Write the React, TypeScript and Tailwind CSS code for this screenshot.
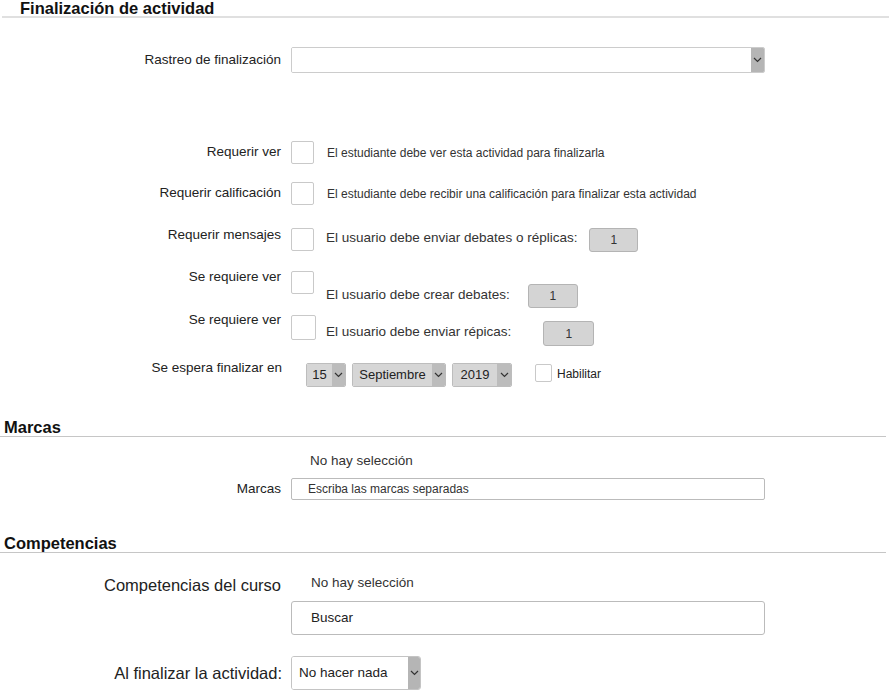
import React from "react";

const font = { fontFamily: '"Liberation Sans", Arial, sans-serif' };

function Chevron() {
  return (
    <svg width="9" height="6" viewBox="0 0 9 6" className="block">
      <polyline points="1,1 4.5,4.5 8,1" fill="none" stroke="#333" strokeWidth="1.2" />
    </svg>
  );
}

function Checkbox({ size = "w-[23px] h-[23px]", className = "" }: { size?: string; className?: string }) {
  return <div className={`${size} shrink-0 border border-[#c9c9c9] rounded-[2px] bg-white ${className}`} />;
}

function NumBox({ className = "" }: { className?: string }) {
  return (
    <div
      className={`shrink-0 flex items-center justify-center bg-[#d4d4d4] border border-[#b4b4b4] rounded-[3px] text-[12px] text-[#333] ${className}`}
    >
      1
    </div>
  );
}

function DateSelect({ value, width, arrow }: { value: string; width: string; arrow: string }) {
  return (
    <div className={`${width} h-[24px] shrink-0 flex border border-[#bdbdbd] rounded-[2px] overflow-hidden`}>
      <div className="flex-1 bg-[#d6d6d6] flex items-center justify-center text-[13px] text-[#222]">{value}</div>
      <div className={`${arrow} bg-[#bcbcbc] flex items-center justify-center`}>
        <Chevron />
      </div>
    </div>
  );
}

function Label({ children, className = "" }: { children: React.ReactNode; className?: string }) {
  return <div className={`w-[281px] shrink-0 text-right text-[13.5px] text-[#222] ${className}`}>{children}</div>;
}

function Heading({ children }: { children: React.ReactNode }) {
  return <span className="block text-[16.5px] font-bold leading-[14px] pt-[1px] text-[#111]">{children}</span>;
}

export default function App() {
  return (
    <div className="w-[889px] h-[690px] overflow-hidden bg-white text-[#222]" style={font}>
      {/* Finalización de actividad */}
      <div className="ml-[2px] pl-[18px] h-[18px] border-b-2 border-[#e0e0e0]">
        <Heading>Finalización de actividad</Heading>
      </div>

      <div className="mt-[29px] h-[26px] flex items-center">
        <Label>Rastreo de finalización</Label>
        <div className="ml-[10px] w-[474px] h-[26px] flex border border-[#cccccc] rounded-[2px] overflow-hidden">
          <div className="flex-1 bg-white" />
          <div className="w-[13px] bg-[#b5b5b5] flex items-center justify-center">
            <Chevron />
          </div>
        </div>
      </div>

      <div className="mt-[68px] h-[23px] flex items-center">
        <Label>Requerir ver</Label>
        <Checkbox className="ml-[10px]" />
        <span className="ml-[13px] text-[12px] text-[#333]">El estudiante debe ver esta actividad para finalizarla</span>
      </div>

      <div className="mt-[18px] h-[23px] flex items-center">
        <Label>Requerir calificación</Label>
        <Checkbox className="ml-[10px]" />
        <span className="ml-[13px] text-[12px] text-[#333]">
          El estudiante debe recibir una calificación para finalizar esta actividad
        </span>
      </div>

      <div className="mt-[23px] h-[24px] flex items-start">
        <Label className="leading-[16px] -mt-[1px]">Requerir mensajes</Label>
        <Checkbox className="ml-[10px]" />
        <span className="ml-[12px] mt-[2px] text-[13.5px] leading-[16px] text-[#333]">
          El usuario debe enviar debates o réplicas:
        </span>
        <NumBox className="ml-[12px] w-[49px] h-[24px]" />
      </div>

      <div className="mt-[17px] h-[39px] flex items-start">
        <Label className="leading-[16px]">Se requiere ver</Label>
        <Checkbox className="ml-[10px] mt-[2px]" />
        <span className="ml-[12px] mt-[18px] text-[13.5px] leading-[16px] text-[#333]">
          El usuario debe crear debates:
        </span>
        <NumBox className="ml-[18px] mt-[15px] w-[50px] h-[24px]" />
      </div>

      <div className="mt-[4px] h-[34px] flex items-start">
        <Label className="leading-[16px]">Se requiere ver</Label>
        <Checkbox className="ml-[10px] mt-[3px]" size="w-[25px] h-[25px]" />
        <span className="ml-[10px] mt-[12px] text-[13.5px] leading-[16px] text-[#333]">
          El usuario debe enviar répicas:
        </span>
        <NumBox className="ml-[32px] mt-[9px] w-[51px] h-[25px]" />
      </div>

      <div className="mt-[14px] h-[27px] flex items-start">
        <Label className="leading-[16px] w-[282px]">Se espera finalizar en</Label>
        <div className="ml-[24px] mt-[3px] flex gap-[6px]">
          <DateSelect value="15" width="w-[40px]" arrow="w-[13px]" />
          <DateSelect value="Septiembre" width="w-[94px]" arrow="w-[13px]" />
          <DateSelect value="2019" width="w-[60px]" arrow="w-[14px]" />
        </div>
        <Checkbox className="ml-[23px] mt-[4px]" size="w-[17px] h-[18px]" />
        <span className="ml-[5px] mt-[7px] text-[12px] leading-[14px] text-[#222]">Habilitar</span>
      </div>

      {/* Marcas */}
      <div className="mt-[32px] w-[886px] pl-[4px] h-[18px] border-b border-[#c6c6c6]">
        <Heading>Marcas</Heading>
      </div>

      <div className="mt-[16px] pl-[310px] text-[13.5px] leading-[16px] text-[#333]">No hay selección</div>

      <div className="mt-[9px] h-[22px] flex items-center">
        <Label>Marcas</Label>
        <div className="ml-[10px] w-[474px] h-[22px] flex items-center border border-[#bbbbbb] rounded-[2px] pl-[16px] text-[12px] text-[#333]">
          Escriba las marcas separadas
        </div>
      </div>

      {/* Competencias */}
      <div className="mt-[35px] w-[886px] pl-[4px] h-[18px] border-b border-[#c6c6c6]">
        <Heading>Competencias</Heading>
      </div>

      <div className="mt-[22px] flex items-start">
        <div className="w-[281px] shrink-0 text-right text-[16.5px] leading-[20px]">Competencias del curso</div>
        <span className="ml-[30px] text-[13.5px] leading-[16px] text-[#333]">No hay selección</span>
      </div>

      <div className="mt-[6px] ml-[291px] w-[474px] h-[34px] flex items-center border border-[#bbbbbb] rounded-[3px] pl-[19px] text-[13.5px] text-[#222]">
        Buscar
      </div>

      <div className="mt-[21px] h-[34px] flex items-center">
        <div className="w-[282px] shrink-0 text-right text-[16.5px]">Al finalizar la actividad:</div>
        <div className="ml-[9px] w-[130px] h-[34px] flex border border-[#c4c4c4] rounded-[3px] overflow-hidden">
          <div className="flex-1 bg-white flex items-center pl-[7px] text-[13.5px] text-[#222]">No hacer nada</div>
          <div className="w-[12px] bg-[#b5b5b5] flex items-center justify-center">
            <Chevron />
          </div>
        </div>
      </div>
    </div>
  );
}
